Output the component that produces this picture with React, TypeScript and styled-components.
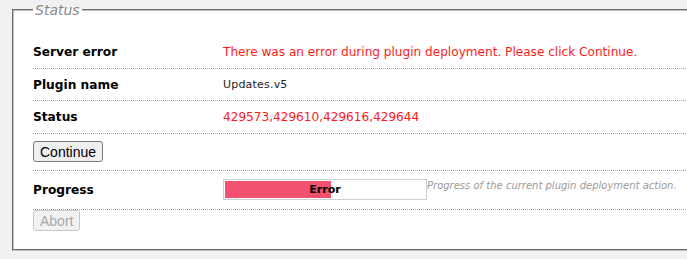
import React from "react";
import styled, { createGlobalStyle } from "styled-components";

const Global = createGlobalStyle`
  html, body {
    margin: 0;
    padding: 0;
    background: #f0f1f3;
    overflow: hidden;
  }
  body {
    font-family: "DejaVu Sans", Verdana, sans-serif;
  }
`;

const Page = styled.div`
  padding: 2px 0 0 12px;
  width: 760px;
`;

const Fieldset = styled.fieldset`
  margin: 0;
  border: 2px groove #c0c0c0;
  background: #ffffff;
  padding: 18px 0 18px 19px;
  min-width: 0;
`;

const Legend = styled.legend`
  padding: 0 2px;
  font-size: 14px;
  line-height: 16px;
  font-style: italic;
  color: #8a8a8a;
`;

const Row = styled.div<{ $pt?: number; $pb?: number; $last?: boolean }>`
  display: grid;
  grid-template-columns: 190px 1fr;
  align-items: center;
  padding-top: ${(p) => p.$pt ?? 8}px;
  padding-bottom: ${(p) => p.$pb ?? 8}px;
  border-bottom: ${(p) => (p.$last ? "none" : "1px dotted #a0a0a0")};
`;

const Label = styled.div`
  font-size: 12.2px;
  line-height: 16px;
  font-weight: bold;
  color: #000;
`;

const Value = styled.div<{ $error?: boolean; $small?: boolean }>`
  font-size: ${(p) => (p.$small ? 11 : 12.1)}px;
  letter-spacing: ${(p) => (p.$small ? 0.2 : 0)}px;
  line-height: 16px;
  color: ${(p) => (p.$error ? "#ff1a1a" : "#222")};
  white-space: nowrap;
`;

const Button = styled.button`
  font-family: "Liberation Sans", Arial, sans-serif;
  font-size: 14px;
  height: 21px;
  padding: 0 6px;
  border: 1px solid #7a7a7a;
  border-radius: 3px;
  background: #efefef;
  color: #000;
  justify-self: start;
  &:disabled {
    border-color: #c8c8c8;
    background: #f2f2f2;
    color: #a8a8a8;
  }
`;

const ProgressCell = styled.div`
  display: flex;
  align-items: flex-start;
`;

const Bar = styled.div`
  position: relative;
  box-sizing: border-box;
  width: 204px;
  height: 21px;
  border: 1px solid #cfcfcf;
  padding: 1px;
  background: #fff;
  flex: none;
`;

const Fill = styled.div`
  height: 100%;
  background: #f4506f;
`;

const BarText = styled.span`
  position: absolute;
  inset: 0;
  display: flex;
  align-items: center;
  justify-content: center;
  font-size: 11px;
  font-weight: bold;
  color: #000;
`;

const Hint = styled.span`
  font-size: 10px;
  line-height: 14px;
  font-style: italic;
  color: #9a9a9a;
  white-space: nowrap;
`;

export default function App() {
  const pct = 53;
  return (
    <>
      <Global />
      <Page>
        <Fieldset>
          <Legend>Status</Legend>
          <Row>
            <Label>Server error</Label>
            <Value $error>There was an error during plugin deployment. Please click Continue.</Value>
          </Row>
          <Row $pb={7}>
            <Label>Plugin name</Label>
            <Value $small>Updates.v5</Value>
          </Row>
          <Row>
            <Label>Status</Label>
            <Value $error>429573,429610,429616,429644</Value>
          </Row>
          <Row $pt={7} $pb={8}>
            <Button>Continue</Button>
          </Row>
          <Row $pt={8} $pb={9}>
            <Label>Progress</Label>
            <ProgressCell>
              <Bar>
                <Fill style={{ width: `${pct}%` }} />
                <BarText>Error</BarText>
              </Bar>
              <Hint>Progress of the current plugin deployment action.</Hint>
            </ProgressCell>
          </Row>
          <Row $pt={0} $pb={0} $last>
            <Button disabled>Abort</Button>
          </Row>
        </Fieldset>
      </Page>
    </>
  );
}
